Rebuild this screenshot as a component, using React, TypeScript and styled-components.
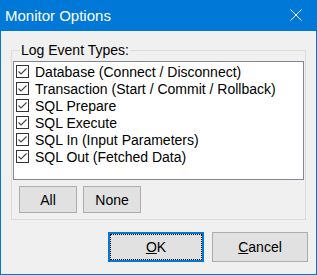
import React from 'react'
import styled, { createGlobalStyle } from 'styled-components'

const GlobalStyle = createGlobalStyle`
  html, body {
    margin: 0;
    padding: 0;
    background: #f0f0f0;
  }
  * {
    box-sizing: border-box;
  }
`

const Window = styled.div`
  display: flex;
  flex-direction: column;
  width: 317px;
  height: 275px;
  background: #f0f0f0;
  border: 1px solid #0078d7;
  border-top: none;
  font-family: "Liberation Sans", Arial, sans-serif;
  font-size: 14px;
  color: #000;
`

const TitleBar = styled.div`
  display: flex;
  align-items: center;
  justify-content: space-between;
  height: 31px;
  margin: 0 -1px;
  padding: 0 15px 1px 5px;
  background: #0078d7;
  color: #fff;
  font-size: 15px;
`

const Body = styled.div`
  display: flex;
  flex-direction: column;
  flex: 1;
  padding: 10px 10px 0;
`

const GroupBox = styled.fieldset`
  margin: 0;
  padding: 0 1px 6px;
  border: 1px solid #dcdcdc;
  min-width: 0;
`

const GroupLabel = styled.legend`
  margin-left: 7px;
  padding: 0 1px;
  line-height: 18px;
`

const ListBox = styled.div`
  display: flex;
  flex-direction: column;
  height: 119px;
  margin-top: 2px;
  padding: 1px 2px;
  background: #fff;
  border: 1px solid #828790;
`

const Row = styled.label`
  display: flex;
  align-items: center;
  gap: 6px;
  height: 17px;
  white-space: nowrap;
`

const GroupButtons = styled.div`
  display: flex;
  gap: 6px;
  padding: 6px 0 0 6px;
`

const Button = styled.button<{ $wide?: boolean; $focused?: boolean }>`
  width: ${p => (p.$wide ? '96px' : '58px')};
  height: ${p => (p.$wide ? '30px' : '27px')};
  padding: 0;
  background: #e1e1e1;
  border: ${p => (p.$focused ? '2px solid #0078d7' : '1px solid #adadad')};
  outline: ${p => (p.$focused ? '1px dotted #000' : 'none')};
  outline-offset: -3px;
  font-family: inherit;
  font-size: 14px;
  color: #000;
`

const DialogButtons = styled.div`
  display: flex;
  justify-content: flex-end;
  gap: 8px;
  padding: 12px 0 0;
  margin-right: -2px;
`

const Check = () => (
  <svg width="13" height="13" viewBox="0 0 13 13">
    <rect x="0.5" y="0.5" width="12" height="12" fill="#fff" stroke="#333" />
    <path d="M2.5 6.5 L5 9 L10.5 3.5" fill="none" stroke="#444" strokeWidth="1.1" />
  </svg>
)

const CloseIcon = () => (
  <svg width="12" height="12" viewBox="0 0 12 12">
    <path d="M0.5 0.5 L11.5 11.5 M11.5 0.5 L0.5 11.5" stroke="#fff" strokeWidth="1" />
  </svg>
)

const events = [
  'Database (Connect / Disconnect)',
  'Transaction (Start / Commit / Rollback)',
  'SQL Prepare',
  'SQL Execute',
  'SQL In (Input Parameters)',
  'SQL Out (Fetched Data)',
]

const App = () => (
  <>
    <GlobalStyle />
    <Window>
      <TitleBar>
        <span>Monitor Options</span>
        <CloseIcon />
      </TitleBar>
      <Body>
        <GroupBox>
          <GroupLabel>Log Event Types:</GroupLabel>
          <ListBox>
            {events.map(e => (
              <Row key={e}>
                <Check />
                <span>{e}</span>
              </Row>
            ))}
          </ListBox>
          <GroupButtons>
            <Button>All</Button>
            <Button>None</Button>
          </GroupButtons>
        </GroupBox>
        <DialogButtons>
          <Button $wide $focused><u>O</u>K</Button>
          <Button $wide><u>C</u>ancel</Button>
        </DialogButtons>
      </Body>
    </Window>
  </>
)

export default App
